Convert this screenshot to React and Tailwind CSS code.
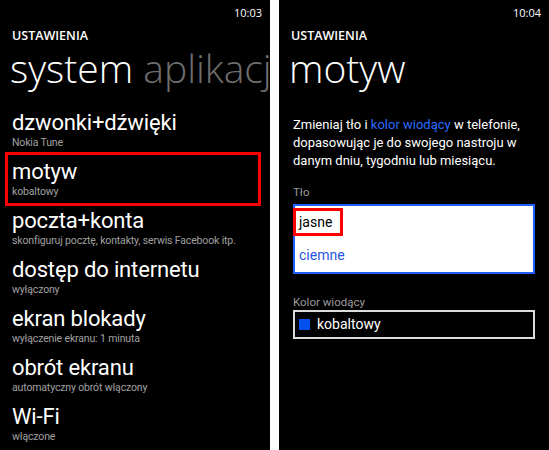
const font = { fontFamily: 'Roboto, "Open Sans", sans-serif' };
const headFont = { fontFamily: '"Open Sans", Roboto, sans-serif' };

const items = [
  { title: "dzwonki+dźwięki", sub: "Nokia Tune" },
  { title: "motyw", sub: "kobaltowy", marked: true },
  { title: "poczta+konta", sub: "skonfiguruj pocztę, kontakty, serwis Facebook itp." },
  { title: "dostęp do internetu", sub: "wyłączony" },
  { title: "ekran blokady", sub: "wyłączenie ekranu: 1 minuta" },
  { title: "obrót ekranu", sub: "automatyczny obrót włączony" },
  { title: "Wi-Fi", sub: "włączone" },
];

const Header = ({ time, children }) => (
  <div style={headFont}>
    <div className="text-[11px] leading-[26px] text-right pr-[8px]">{time}</div>
    <div className="pl-[12px] text-[12.5px] font-semibold leading-[20px]">USTAWIENIA</div>
    <div className="pl-[10px] text-[39px] font-light leading-[44px] whitespace-nowrap">{children}</div>
  </div>
);

const SettingsList = () => {
  return (
    <div className="w-[270px] h-[450px] bg-black text-white overflow-hidden">
      <Header time="10:03">
        system <span className="text-[#6e6e6e]">aplikacje</span>
      </Header>
      <div className="mt-[19px] flex flex-col">
        {items.map((it) => (
          <div key={it.title} className="relative pl-[12px] h-[49px]">
            <div className="text-[22px] leading-[27px] tracking-[-0.15px] whitespace-nowrap">{it.title}</div>
            <div className="text-[10.5px] leading-[13px] tracking-[-0.15px] text-[#a0a0a0] whitespace-nowrap">{it.sub}</div>
            {it.marked && (
              <div className="absolute left-[5px] top-[-6px] w-[256px] h-[54px] border-[3px] border-[#ff0000]" />
            )}
          </div>
        ))}
      </div>
    </div>
  );
};

const ThemePage = () => {
  return (
    <div className="w-[270px] h-[450px] bg-black text-white overflow-hidden">
      <Header time="10:04">motyw</Header>
      <div className="px-[14px] mt-[26px]">
        <p className="text-[13px] leading-[18px]">
          Zmieniaj tło i <span className="text-[#2a6bff]">kolor wiodący</span> w telefonie, dopasowując je do swojego nastroju w danym dniu, tygodniu lub miesiącu.
        </p>
        <div className="mt-[14px] text-[11.5px] leading-[16px] text-[#9a9a9a]">Tło</div>
        <div className="mt-[4px] h-[70px] border-2 border-[#1f5fff] bg-white flex flex-col">
          <div className="relative h-[32px] pl-[4px] text-[14px] leading-[32px] text-black">
            jasne
            <div className="absolute left-[-2px] top-[2px] w-[50px] h-[28px] border-[3px] border-[#ff0000]" />
          </div>
          <div className="h-[34px] pl-[4px] text-[14px] leading-[34px] text-[#1f55e0]">ciemne</div>
        </div>
        <div className="mt-[21px] text-[11.5px] leading-[14px] text-[#9a9a9a]">Kolor wiodący</div>
        <div className="mt-[1px] h-[29px] border-2 border-[#dcdcdc] flex items-center gap-[7px] pl-[4px]">
          <div className="w-[11px] h-[11px] bg-[#0050ef]" />
          <span className="text-[14px]">kobaltowy</span>
        </div>
      </div>
    </div>
  );
};

export default function App() {
  return (
    <div className="w-[549px] h-[450px] bg-white flex gap-[9px]" style={font}>
      <SettingsList />
      <ThemePage />
    </div>
  );
}
